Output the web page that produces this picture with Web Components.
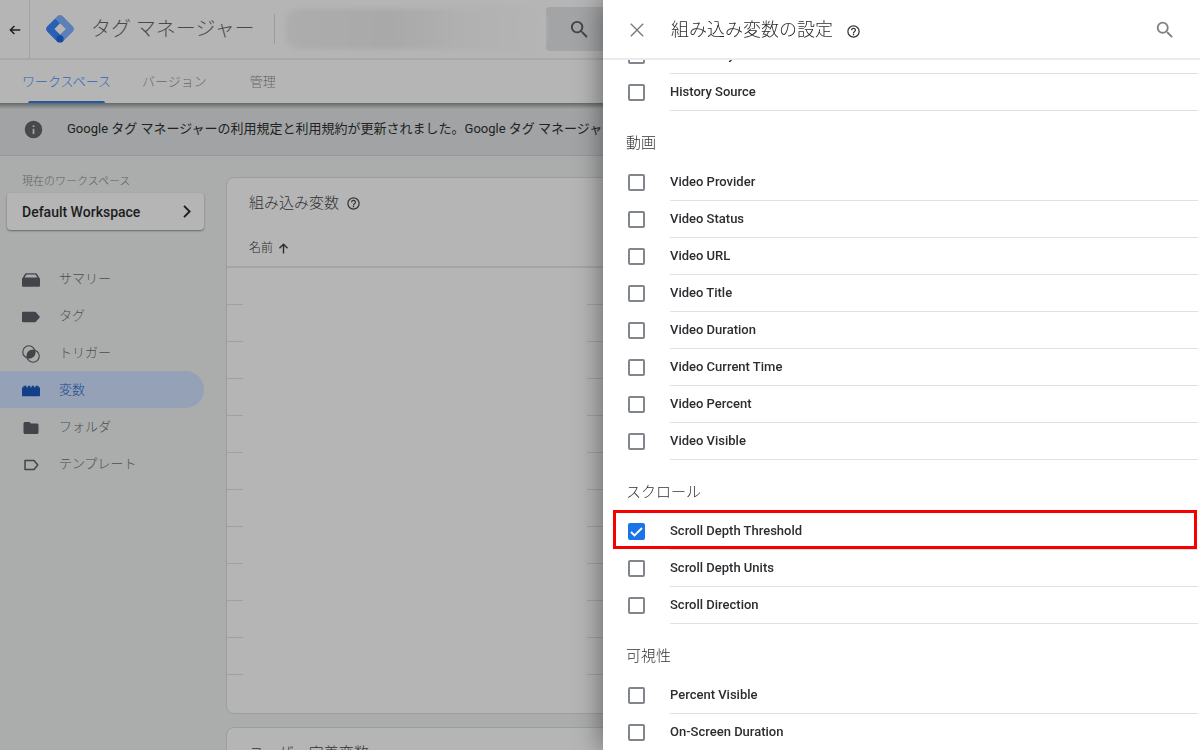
<!DOCTYPE html>
<html lang="ja">
<head>
<meta charset="utf-8">
<title>タグ マネージャー</title>
<style>
html, body { margin: 0; height: 100%; }
body { overflow: hidden; background: #aaadac; color: #3c4043; font-family: Roboto, "Noto Sans CJK JP", sans-serif; font-size: 13px; line-height: 20px; }
</style>
</head>
<body>
<tag-app></tag-app>
<script>
const icons = {
  back: '<path d="M21 12H4M11 5l-7 7 7 7" fill="none" stroke="currentColor" stroke-width="2.6"/>',
  search: '<path fill="currentColor" d="M15.5 14h-.79l-.28-.27A6.47 6.47 0 0 0 16 9.5 6.5 6.5 0 1 0 9.5 16c1.61 0 3.09-.59 4.23-1.57l.27.28v.79l5 4.99L20.49 19l-4.99-5zm-6 0a4.5 4.5 0 1 1 0-9 4.5 4.5 0 0 1 0 9z"/>',
  close: '<path fill="currentColor" d="M20 5.100 18.900 4 12 10.900 5.100 4 4 5.100 10.900 12 4 18.900 5.100 20 12 13.100 18.900 20 20 18.900 13.100 12z"/>',
  help: '<path fill="currentColor" d="M11 18h2v-2h-2v2zm1-16a10 10 0 1 0 0 20 10 10 0 0 0 0-20zm0 18a8 8 0 1 1 0-16 8 8 0 0 1 0 16zm0-14a4 4 0 0 0-4 4h2c0-1.1.9-2 2-2s2 .9 2 2c0 2-3 1.75-3 5h2c0-2.25 3-2.5 3-5a4 4 0 0 0-4-4z"/>',
  info: '<path fill="currentColor" d="M12 2a10 10 0 1 0 0 20 10 10 0 0 0 0-20zm1 15h-2v-6h2v6zm0-8h-2V7h2v2z"/>',
  chevron: '<path d="M8 3l9 9-9 9" fill="none" stroke="currentColor" stroke-width="3"/>',
  up: '<path d="M12 21V4M4.500 11.500 12 4l7.500 7.500" fill="none" stroke="currentColor" stroke-width="2.6"/>',
  summary: '<path fill="currentColor" fill-rule="evenodd" d="M5.500 3h13q1 0 1.500 1L23 9q1 .4 1 1.500v9a1.500 1.500 0 0 1-1.500 1.500h-21A1.500 1.500 0 0 1 0 19.500v-9Q0 9.400 1 9l3-5q.5-1 1.500-1zM6 4.600 3.400 8.600h17.200L18 4.600z"/>',
  tag: '<path fill="currentColor" d="M1.500 5H17q1 0 1.600.8L24 12l-5.400 6.200q-.6.8-1.600.8H1.500Q0 19 0 17.500v-11Q0 5 1.500 5z"/>',
  trigger: '<g fill="none" stroke="currentColor" stroke-width="1.500"><circle cx="9.200" cy="9.200" r="8.200"/><circle cx="14.800" cy="14.800" r="8.200"/></g><path fill="currentColor" d="M17.200 7A8.200 8.200 0 0 0 7 17.200 8.200 8.200 0 0 0 17.200 7z"/>',
  brick: '<path fill="currentColor" d="M0 8q0-1 1-1h1V5h4v2h2V5h3v2h2V5h3v2h2V5h4v2h1q1 0 1 1v10q0 1-1 1H1q-1 0-1-1z"/>',
  folder: '<path fill="currentColor" d="M10 4H4c-1.100 0-2 .9-2 2v12c0 1.100.9 2 2 2h16c1.100 0 2-.9 2-2V8c0-1.100-.9-2-2-2h-8z"/>',
  template: '<path fill="none" stroke="currentColor" stroke-width="2" stroke-linejoin="round" d="M4 6h12l5 6-5 6H4z"/>',
  logo: '<path fill="#5b7fb9" d="M11.500 1.100q2.500-2.100 5 0l10.400 10.400q2.100 2.500 0 5L16.500 26.900 11.600 22 19.600 14 9.200 3.600z"/><path fill="#2860b5" d="M9.200 3.600 1.100 11.500q-2.100 2.500 0 5L11.500 26.900 17 22.100 8.800 14 14.200 8.600z"/><path fill="#b5b5b5" d="M14 8.500 19.500 14 14 19.500 8.500 14z"/><circle cx="14" cy="23.900" r="3.600" fill="#16499c"/>'
};

function define(name, css, html, setup) {
  const template = document.createElement('template');
  template.innerHTML = `<style>*{box-sizing:border-box}button{font:inherit;color:inherit;border:0;padding:0;background:none;display:flex;align-items:center;justify-content:center}a{color:inherit;text-decoration:none}h1,h2,h3{margin:0;font-weight:300}${css}</style>${html}`;
  customElements.define(name, class extends HTMLElement {
    constructor() {
      super();
      this.attachShadow({ mode: 'open' }).append(template.content.cloneNode(true));
    }
    connectedCallback() { if (setup) setup(this, this.shadowRoot); }
  });
}

define('ui-icon', ':host{display:block;flex:none;width:var(--size,18px);height:var(--size,18px)}svg{display:block;width:100%;height:100%}',
  '<svg viewBox="0 0 24 24" aria-hidden="true"></svg>', (el, root) => {
    const svg = root.querySelector('svg'), name = el.getAttribute('name');
    if (!name) return;
    if (name === 'logo') svg.setAttribute('viewBox', '0 0 28 28');
    svg.innerHTML = icons[name];
  });

define('app-header', `
  :host{display:flex;align-items:center;height:60px;border-bottom:2px solid #a7a8a8;background:#b5b5b5}
  .back{align-self:stretch;width:30px;padding-top:2px;border-right:1px solid #a0a1a1;color:#222;--size:14px}
  .logo{--size:28px;margin:0 17px 0 16px}
  h1{font-size:20px;line-height:28px;color:#46494c;white-space:nowrap}
  .name{width:183px}
  .rule{width:1px;height:30px;background:#9a9b9c}
  .account{width:260px;height:40px;margin-left:11px;border-radius:12px;background:linear-gradient(90deg,#adadad,#a9a9a9 40%,#b1b1b1 70%,#b5b5b5);filter:blur(2px)}
  .search{flex:1;height:44px;border-radius:4px;background:#a2a4a6;color:#424548;--size:23px;justify-content:flex-start;padding-left:22px}`,
  `<button class="back" aria-label="戻る"><ui-icon name="back"></ui-icon></button>
   <ui-icon class="logo" name="logo"></ui-icon>
   <h1 class="name">タグ マネージャー</h1><span class="rule"></span><span class="account"></span>
   <button class="search" aria-label="検索"><ui-icon name="search"></ui-icon></button>`);

define('app-tabs', `
  :host{display:block;position:relative;background:#b5b5b5}
  :host::after{content:"";position:absolute;left:0;right:0;top:100%;height:6px;background:linear-gradient(rgba(40,48,44,.5),rgba(40,48,44,0))}
  nav{display:flex;height:43px;padding-left:22px;gap:31px;font-weight:300}
  a{position:relative;display:flex;align-items:center;color:#66696a}
  a:nth-child(2){margin-right:12px}
  a.on{color:#2d66bd}
  a.on::after{content:"";position:absolute;left:6px;right:6px;bottom:0;height:2px;border-radius:2px 2px 0 0;background:#2459a8}`,
  `<nav><a class="on" href="#workspace">ワークスペース</a><a href="#versions">バージョン</a><a href="#admin">管理</a></nav>`);

define('notice-bar', `
  :host{display:flex;align-items:center;height:53px;padding-left:23px;gap:23px;border-bottom:1px solid #959899;background:#a1a3a4;color:#202322;white-space:nowrap;overflow:hidden}
  ui-icon{--size:21px;color:#474a48}`,
  `<ui-icon name="info"></ui-icon><span><slot></slot></span>`);

define('nav-item', `
  :host{display:block;font-weight:300}
  a{display:flex;align-items:center;height:37px;padding-left:22px;gap:19px;color:#4c4f52;border-radius:0 19px 19px 0}
  ui-icon{color:#414549;margin-top:2px}
  :host([active]) a{background:#95a1b6;color:#164691}
  :host([active]) ui-icon{color:#114088}`,
  `<a><ui-icon></ui-icon><span><slot></slot></span></a>`, (el, root) => {
    root.querySelector('a').href = '#' + el.getAttribute('icon');
    const icon = document.createElement('ui-icon');
    icon.setAttribute('name', el.getAttribute('icon'));
    root.querySelector('ui-icon').replaceWith(icon);
  });

define('side-nav', `
  :host{display:block;flex:none;width:204px;padding-top:16px}
  .label{padding-left:22px;font-size:11px;font-weight:300;color:#5c5f60}
  .workspace{width:calc(100% - 7px);height:37px;margin:1px 0 30px 7px;padding:0 10px 0 15px;justify-content:space-between;border-radius:4px;background:#b5b5b5;box-shadow:0 1px 2px rgba(0,0,0,.4);color:#1c1d1e;font-size:14px;font-weight:500;--size:15px}`,
  `<div class="label">現在のワークスペース</div>
   <button class="workspace"><span>Default Workspace</span><ui-icon name="chevron"></ui-icon></button>
   <nav>
    <nav-item icon="summary">サマリー</nav-item><nav-item icon="tag">タグ</nav-item><nav-item icon="trigger">トリガー</nav-item>
    <nav-item icon="brick" active>変数</nav-item><nav-item icon="folder">フォルダ</nav-item><nav-item icon="template">テンプレート</nav-item>
   </nav>`);

define('variable-card', `
  :host{display:block;background:#b5b5b5;border:1px solid #9c9e9e;border-radius:8px;overflow:hidden}
  header{display:flex;align-items:center;height:50px;padding-left:22px;gap:7px;color:#303335;--size:15px}
  h2{font-size:15px;line-height:22px}`,
  `<header><h2><slot name="title"></slot></h2><slot name="help"></slot></header><slot></slot>`);

define('variable-table', `
  :host{display:block;position:relative;padding-bottom:2px}
  table{width:100%;border-collapse:collapse}
  th{height:39px;padding:2px 0 0 22px;border-bottom:2px solid #a4a5a5}
  th button{gap:4px;font-weight:300;font-size:12px;color:#2c2e2e;--size:13px}
  td{height:37px;padding:0;border-bottom:1px solid #9fa0a0}
  tr:last-child td{border:0}
  .cover{position:absolute;left:16px;top:48px;bottom:8px;width:344px;background:#b5b5b5}`,
  `<table><thead><tr><th><button>名前 <ui-icon name="up"></ui-icon></button></th></tr></thead><tbody></tbody></table><div class="cover"></div>`,
  (el, root) => { root.querySelector('tbody').innerHTML = '<tr><td></td></tr>'.repeat(12); });

define('variable-row', `
  :host{display:block;position:relative;padding-left:25px}
  label{display:flex;height:37px;color:#2b2d30;font-weight:500}
  input{appearance:none;flex:none;width:17px;height:17px;margin:10px 25px 0 0;border:2px solid #80868b;border-radius:2px;background:#fff}
  input:checked{border-color:#1a73e8;background:#1a73e8 url("data:image/svg+xml,%3Csvg xmlns='http://www.w3.org/2000/svg' viewBox='0 0 13 13'%3E%3Cpath d='M1 7l3.500 3.500L12 3' fill='none' stroke='white' stroke-width='1.800'/%3E%3C/svg%3E") center/13px no-repeat}
  span{flex:1;padding-top:8px;margin-right:2px;border-bottom:1px solid #dfe0e2}
  :host([highlight])::after{content:"";position:absolute;inset:-3px 3px 1px 10px;border:3px solid #f80000;pointer-events:none}`,
  `<label><input type="checkbox"><span><slot></slot></span></label>`, (el, root) => {
    root.querySelector('input').checked = el.hasAttribute('checked');
  });

define('variable-group', `
  :host{display:block}
  h3{height:53px;padding:21px 0 0 23px;font-size:15px;line-height:22px;color:#303235}`,
  `<h3><slot name="title"></slot></h3><slot></slot>`);

define('settings-drawer', `
  :host{position:fixed;z-index:2;top:0;right:0;bottom:0;width:49.75%;display:flex;flex-direction:column;background:#fff;box-shadow:0 0 26px rgba(0,0,0,.48)}
  header{flex:none;display:flex;align-items:center;height:60px;padding:2px 24px 0;border-bottom:2px solid #ebebeb}
  .close{--size:20px;color:#75787b;margin-right:24px}
  h2{width:167px;font-size:18px;line-height:26px;white-space:nowrap;color:#2a2c2f}
  .help{--size:15px;margin:2px auto 0 8px;color:#333}
  .search{--size:22px;color:#808080}
  .view{flex:1;min-height:0;overflow:hidden}
  .list{margin-top:-23px}`,
  `<header><button class="close" aria-label="閉じる"><ui-icon name="close"></ui-icon></button><h2>組み込み変数の設定</h2>
    <ui-icon class="help" name="help"></ui-icon><button class="search" aria-label="検索"><ui-icon name="search"></ui-icon></button></header>
   <div class="view"><div class="list">
    <variable-row>Old History State</variable-row><variable-row>History Source</variable-row>
    <variable-group><span slot="title">動画</span>
     <variable-row>Video Provider</variable-row><variable-row>Video Status</variable-row><variable-row>Video URL</variable-row><variable-row>Video Title</variable-row>
     <variable-row>Video Duration</variable-row><variable-row>Video Current Time</variable-row><variable-row>Video Percent</variable-row><variable-row>Video Visible</variable-row>
    </variable-group>
    <variable-group><span slot="title">スクロール</span>
     <variable-row checked highlight>Scroll Depth Threshold</variable-row><variable-row>Scroll Depth Units</variable-row><variable-row>Scroll Direction</variable-row>
    </variable-group>
    <variable-group><span slot="title">可視性</span>
     <variable-row>Percent Visible</variable-row><variable-row>On-Screen Duration</variable-row>
    </variable-group>
   </div></div>`);

define('tag-app', `
  :host{display:flex;flex-direction:column;height:100vh;overflow:hidden}
  app-header,app-tabs,notice-bar{flex:none}
  app-tabs{z-index:1}
  .body{flex:1;min-height:0;display:flex;gap:22px}
  main{flex:1;padding-top:21px;display:flex;flex-direction:column;gap:13px}
  variable-card{flex:none}`,
  `<app-header></app-header><app-tabs></app-tabs>
   <notice-bar>Google タグ マネージャーの利用規定と利用規約が更新されました。Google タグ マネージャー</notice-bar>
   <div class="body"><side-nav></side-nav><main>
    <variable-card><span slot="title">組み込み変数</span><ui-icon slot="help" name="help"></ui-icon><variable-table></variable-table></variable-card>
    <variable-card><span slot="title">ユーザー定義変数</span></variable-card>
   </main></div>
   <settings-drawer></settings-drawer>`);
</script>
</body>
</html>
